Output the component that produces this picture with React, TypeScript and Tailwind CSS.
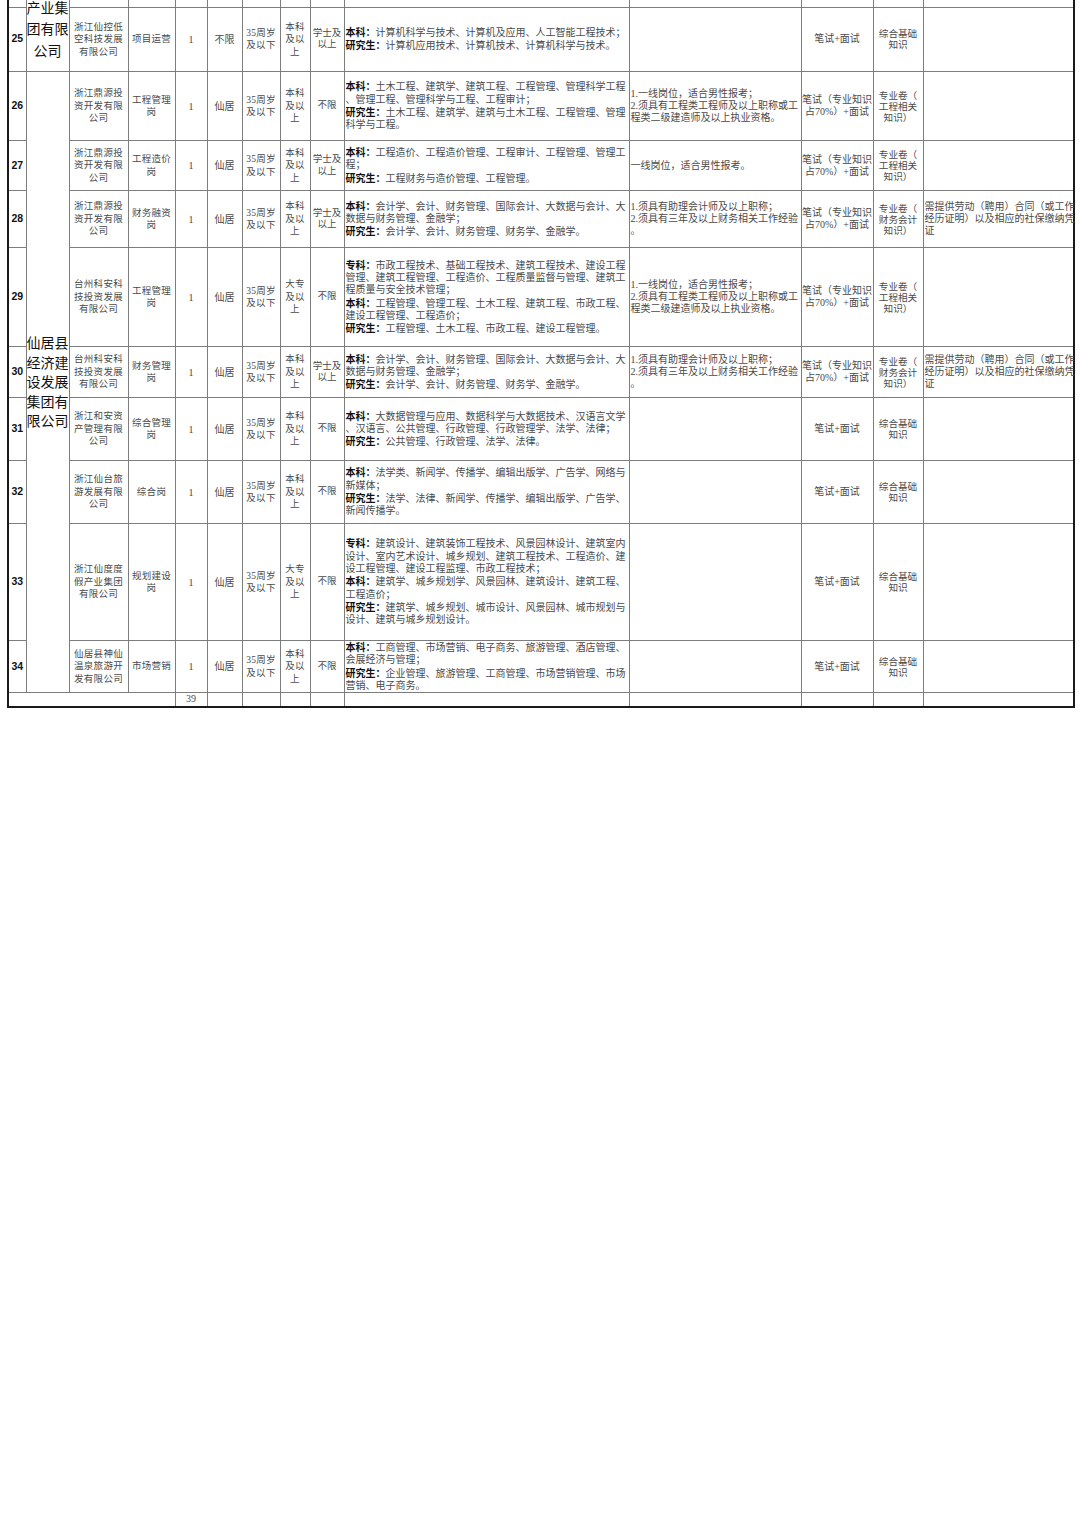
type Line = [string, string];

type Row = {
  n: number;
  h: string;
  company: string[];
  pos: string[];
  loc: string;
  edu: string[];
  deg: string[];
  major: Line[];
  other: string[];
  exam: string[];
  content: string[];
  remark: string[];
};

const AGE = ["35周岁", "及以下"];
const BK = ["本科", "及以", "上"];
const DZ = ["大专", "及以", "上"];
const XS = ["学士及", "以上"];
const ZY = ["笔试（专业知识", "占70%）+面试"];
const BS = ["笔试+面试"];
const JC = ["综合基础", "知识"];
const GC = ["专业卷（", "工程相关", "知识）"];
const CW = ["专业卷（", "财务会计", "知识）"];
const GC_REQ = ["1.一线岗位，适合男性报考；", "2.须具有工程类工程师及以上职称或工", "程类二级建造师及以上执业资格。"];
const CW_REQ = ["1.须具有助理会计师及以上职称；", "2.须具有三年及以上财务相关工作经验", "。"];
const CW_NOTE = ["需提供劳动（聘用）合同（或工作", "经历证明）以及相应的社保缴纳凭", "证"];
const CW_MAJOR: Line[] = [
  ["本科：", "会计学、会计、财务管理、国际会计、大数据与会计、大"],
  ["", "数据与财务管理、金融学；"],
  ["研究生：", "会计学、会计、财务管理、财务学、金融学。"],
];
const DY = ["浙江鼎源投", "资开发有限", "公司"];
const KA = ["台州科安科", "技投资发展", "有限公司"];

const rows: Row[] = [
  {
    n: 25, h: "h-[64px]", company: ["浙江仙控低", "空科技发展", "有限公司"], pos: ["项目运营"], loc: "不限",
    edu: BK, deg: XS,
    major: [
      ["本科：", "计算机科学与技术、计算机及应用、人工智能工程技术；"],
      ["研究生：", "计算机应用技术、计算机技术、计算机科学与技术。"],
    ],
    other: [], exam: BS, content: JC, remark: [],
  },
  {
    n: 26, h: "h-[69px]", company: DY, pos: ["工程管理", "岗"], loc: "仙居", edu: BK, deg: ["不限"],
    major: [
      ["本科：", "土木工程、建筑学、建筑工程、工程管理、管理科学工程"],
      ["", "、管理工程、管理科学与工程、工程审计；"],
      ["研究生：", "土木工程、建筑学、建筑与土木工程、工程管理、管理"],
      ["", "科学与工程。"],
    ],
    other: GC_REQ, exam: ZY, content: GC, remark: [],
  },
  {
    n: 27, h: "h-[50px]", company: DY, pos: ["工程造价", "岗"], loc: "仙居", edu: BK, deg: XS,
    major: [
      ["本科：", "工程造价、工程造价管理、工程审计、工程管理、管理工"],
      ["", "程；"],
      ["研究生：", "工程财务与造价管理、工程管理。"],
    ],
    other: ["一线岗位，适合男性报考。"], exam: ZY, content: GC, remark: [],
  },
  {
    n: 28, h: "h-[57px]", company: DY, pos: ["财务融资", "岗"], loc: "仙居", edu: BK, deg: XS,
    major: CW_MAJOR, other: CW_REQ, exam: ZY, content: CW, remark: CW_NOTE,
  },
  {
    n: 29, h: "h-[99px]", company: KA, pos: ["工程管理", "岗"], loc: "仙居", edu: DZ, deg: ["不限"],
    major: [
      ["专科：", "市政工程技术、基础工程技术、建筑工程技术、建设工程"],
      ["", "管理、建筑工程管理、工程造价、工程质量监督与管理、建筑工"],
      ["", "程质量与安全技术管理；"],
      ["本科：", "工程管理、管理工程、土木工程、建筑工程、市政工程、"],
      ["", "建设工程管理、工程造价；"],
      ["研究生：", "工程管理、土木工程、市政工程、建设工程管理。"],
    ],
    other: GC_REQ, exam: ZY, content: GC, remark: [],
  },
  {
    n: 30, h: "h-[51px]", company: KA, pos: ["财务管理", "岗"], loc: "仙居", edu: BK, deg: XS,
    major: CW_MAJOR, other: CW_REQ, exam: ZY, content: CW, remark: CW_NOTE,
  },
  {
    n: 31, h: "h-[63px]", company: ["浙江和安资", "产管理有限", "公司"], pos: ["综合管理", "岗"], loc: "仙居",
    edu: BK, deg: ["不限"],
    major: [
      ["本科：", "大数据管理与应用、数据科学与大数据技术、汉语言文学"],
      ["", "、汉语言、公共管理、行政管理、行政管理学、法学、法律；"],
      ["研究生：", "公共管理、行政管理、法学、法律。"],
    ],
    other: [], exam: BS, content: JC, remark: [],
  },
  {
    n: 32, h: "h-[63px]", company: ["浙江仙台旅", "游发展有限", "公司"], pos: ["综合岗"], loc: "仙居",
    edu: BK, deg: ["不限"],
    major: [
      ["本科：", "法学类、新闻学、传播学、编辑出版学、广告学、网络与"],
      ["", "新媒体；"],
      ["研究生：", "法学、法律、新闻学、传播学、编辑出版学、广告学、"],
      ["", "新闻传播学。"],
    ],
    other: [], exam: BS, content: JC, remark: [],
  },
  {
    n: 33, h: "h-[117px]", company: ["浙江仙度度", "假产业集团", "有限公司"], pos: ["规划建设", "岗"], loc: "仙居",
    edu: DZ, deg: ["不限"],
    major: [
      ["专科：", "建筑设计、建筑装饰工程技术、风景园林设计、建筑室内"],
      ["", "设计、室内艺术设计、城乡规划、建筑工程技术、工程造价、建"],
      ["", "设工程管理、建设工程监理、市政工程技术；"],
      ["本科：", "建筑学、城乡规划学、风景园林、建筑设计、建筑工程、"],
      ["", "工程造价；"],
      ["研究生：", "建筑学、城乡规划、城市设计、风景园林、城市规划与"],
      ["", "设计、建筑与城乡规划设计。"],
    ],
    other: [], exam: BS, content: JC, remark: [],
  },
  {
    n: 34, h: "h-[52px]", company: ["仙居县神仙", "温泉旅游开", "发有限公司"], pos: ["市场营销"], loc: "仙居",
    edu: BK, deg: ["不限"],
    major: [
      ["本科：", "工商管理、市场营销、电子商务、旅游管理、酒店管理、"],
      ["", "会展经济与管理；"],
      ["研究生：", "企业管理、旅游管理、工商管理、市场营销管理、市场"],
      ["", "营销、电子商务。"],
    ],
    other: [], exam: BS, content: JC, remark: [],
  },
];

const td = "border border-[#7d7d7d] p-0 align-middle";
const body = "font-['Liberation_Serif','Noto_Sans_CJK_SC',serif] text-[#4a4a4a]";

function Lines({ items, className }: { items: string[]; className: string }) {
  return (
    <div className={className}>
      {items.map((t, i) => (
        <div key={i} className="whitespace-nowrap">
          {t}
        </div>
      ))}
    </div>
  );
}

function Center({ items, small }: { items: string[]; small?: boolean }) {
  return (
    <Lines
      items={items}
      className={`${body} text-center ${small ? "text-[9.5px] leading-[11.5px]" : "text-[9.5px] leading-[12.5px] tracking-[0.3px]"}`}
    />
  );
}

function GroupText({ items }: { items: string[] }) {
  return (
    <>
      {items.map((t, i) => (
        <div key={i} className="whitespace-nowrap">
          {t}
        </div>
      ))}
    </>
  );
}

export default function App() {
  return (
    <div className="min-h-[1522px] w-[1080px] bg-white">
      <table className="ml-[7px] w-[1066px] table-fixed border-collapse border-x-2 border-b-2 border-[#1a1a1a]">
        <colgroup>
          <col className="w-[18px]" />
          <col className="w-[43px]" />
          <col className="w-[59px]" />
          <col className="w-[47px]" />
          <col className="w-[32px]" />
          <col className="w-[35px]" />
          <col className="w-[38px]" />
          <col className="w-[30px]" />
          <col className="w-[34px]" />
          <col className="w-[285px]" />
          <col className="w-[172px]" />
          <col className="w-[72px]" />
          <col className="w-[50px]" />
          <col className="w-[151px]" />
        </colgroup>
        <tbody>
          {/* tail of the previous row, cut by the top of the screenshot */}
          <tr className="h-[7px]">
            <td className="border-x border-b border-[#7d7d7d] p-0" />
            <td rowSpan={2} className="border-x border-[#7d7d7d] p-0 align-bottom">
              <div className="flex h-[71px] flex-col items-center justify-end overflow-hidden pb-[10px] font-['Noto_Sans_CJK_SC',sans-serif] text-[14px] leading-[21.5px] text-[#111]">
                <GroupText items={["产业集", "团有限", "公司"]} />
              </div>
            </td>
            {Array.from({ length: 12 }).map((_, i) => (
              <td key={i} className="border-x border-b border-[#7d7d7d] p-0" />
            ))}
          </tr>
          {rows.map((r) => (
            <tr key={r.n} className={r.h}>
              <td className={`${td} text-center font-['Liberation_Sans',sans-serif] text-[10.5px] font-bold text-[#111]`}>
                {r.n}
              </td>
              {r.n === 26 && (
                <td rowSpan={9} className={`${td} text-center`}>
                  <div className="font-['Noto_Sans_CJK_SC',sans-serif] text-[14px] leading-[19.5px] text-[#111]">
                    <GroupText items={["仙居县", "经济建", "设发展", "集团有", "限公司"]} />
                  </div>
                </td>
              )}
              <td className={td}>
                <Center items={r.company} />
              </td>
              <td className={td}>
                <Center items={r.pos} />
              </td>
              <td className={`${td} text-center ${body} text-[10px]`}>1</td>
              <td className={`${td} text-center ${body} text-[10px]`}>{r.loc}</td>
              <td className={td}>
                <Center items={AGE} />
              </td>
              <td className={td}>
                <Center items={r.edu} />
              </td>
              <td className={td}>
                <Center items={r.deg} small />
              </td>
              <td className={td}>
                <div className={`${body} pl-[1px] text-[10px] leading-[12.3px]`}>
                  {r.major.map(([b, t], i) => (
                    <div key={i} className="whitespace-nowrap">
                      {b && (
                        <span className="font-['Noto_Sans_CJK_SC',sans-serif] font-bold text-[#111]">{b}</span>
                      )}
                      {t}
                    </div>
                  ))}
                </div>
              </td>
              <td className={td}>
                <Lines items={r.other} className={`${body} pl-[1px] text-[10px] leading-[11.8px]`} />
              </td>
              <td className={td}>
                <Lines items={r.exam} className={`${body} text-center text-[10px] leading-[12px]`} />
              </td>
              <td className={td}>
                <Lines items={r.content} className={`${body} text-center text-[9.6px] leading-[11px]`} />
              </td>
              <td className={td}>
                <Lines items={r.remark} className={`${body} pl-[1px] text-[10px] leading-[12.3px]`} />
              </td>
            </tr>
          ))}
          <tr className="h-[14px]">
            <td colSpan={4} className={td} />
            <td className={`${td} text-center ${body} text-[10px] leading-[12px]`}>39</td>
            {Array.from({ length: 9 }).map((_, i) => (
              <td key={i} className={td} />
            ))}
          </tr>
        </tbody>
      </table>
    </div>
  );
}
